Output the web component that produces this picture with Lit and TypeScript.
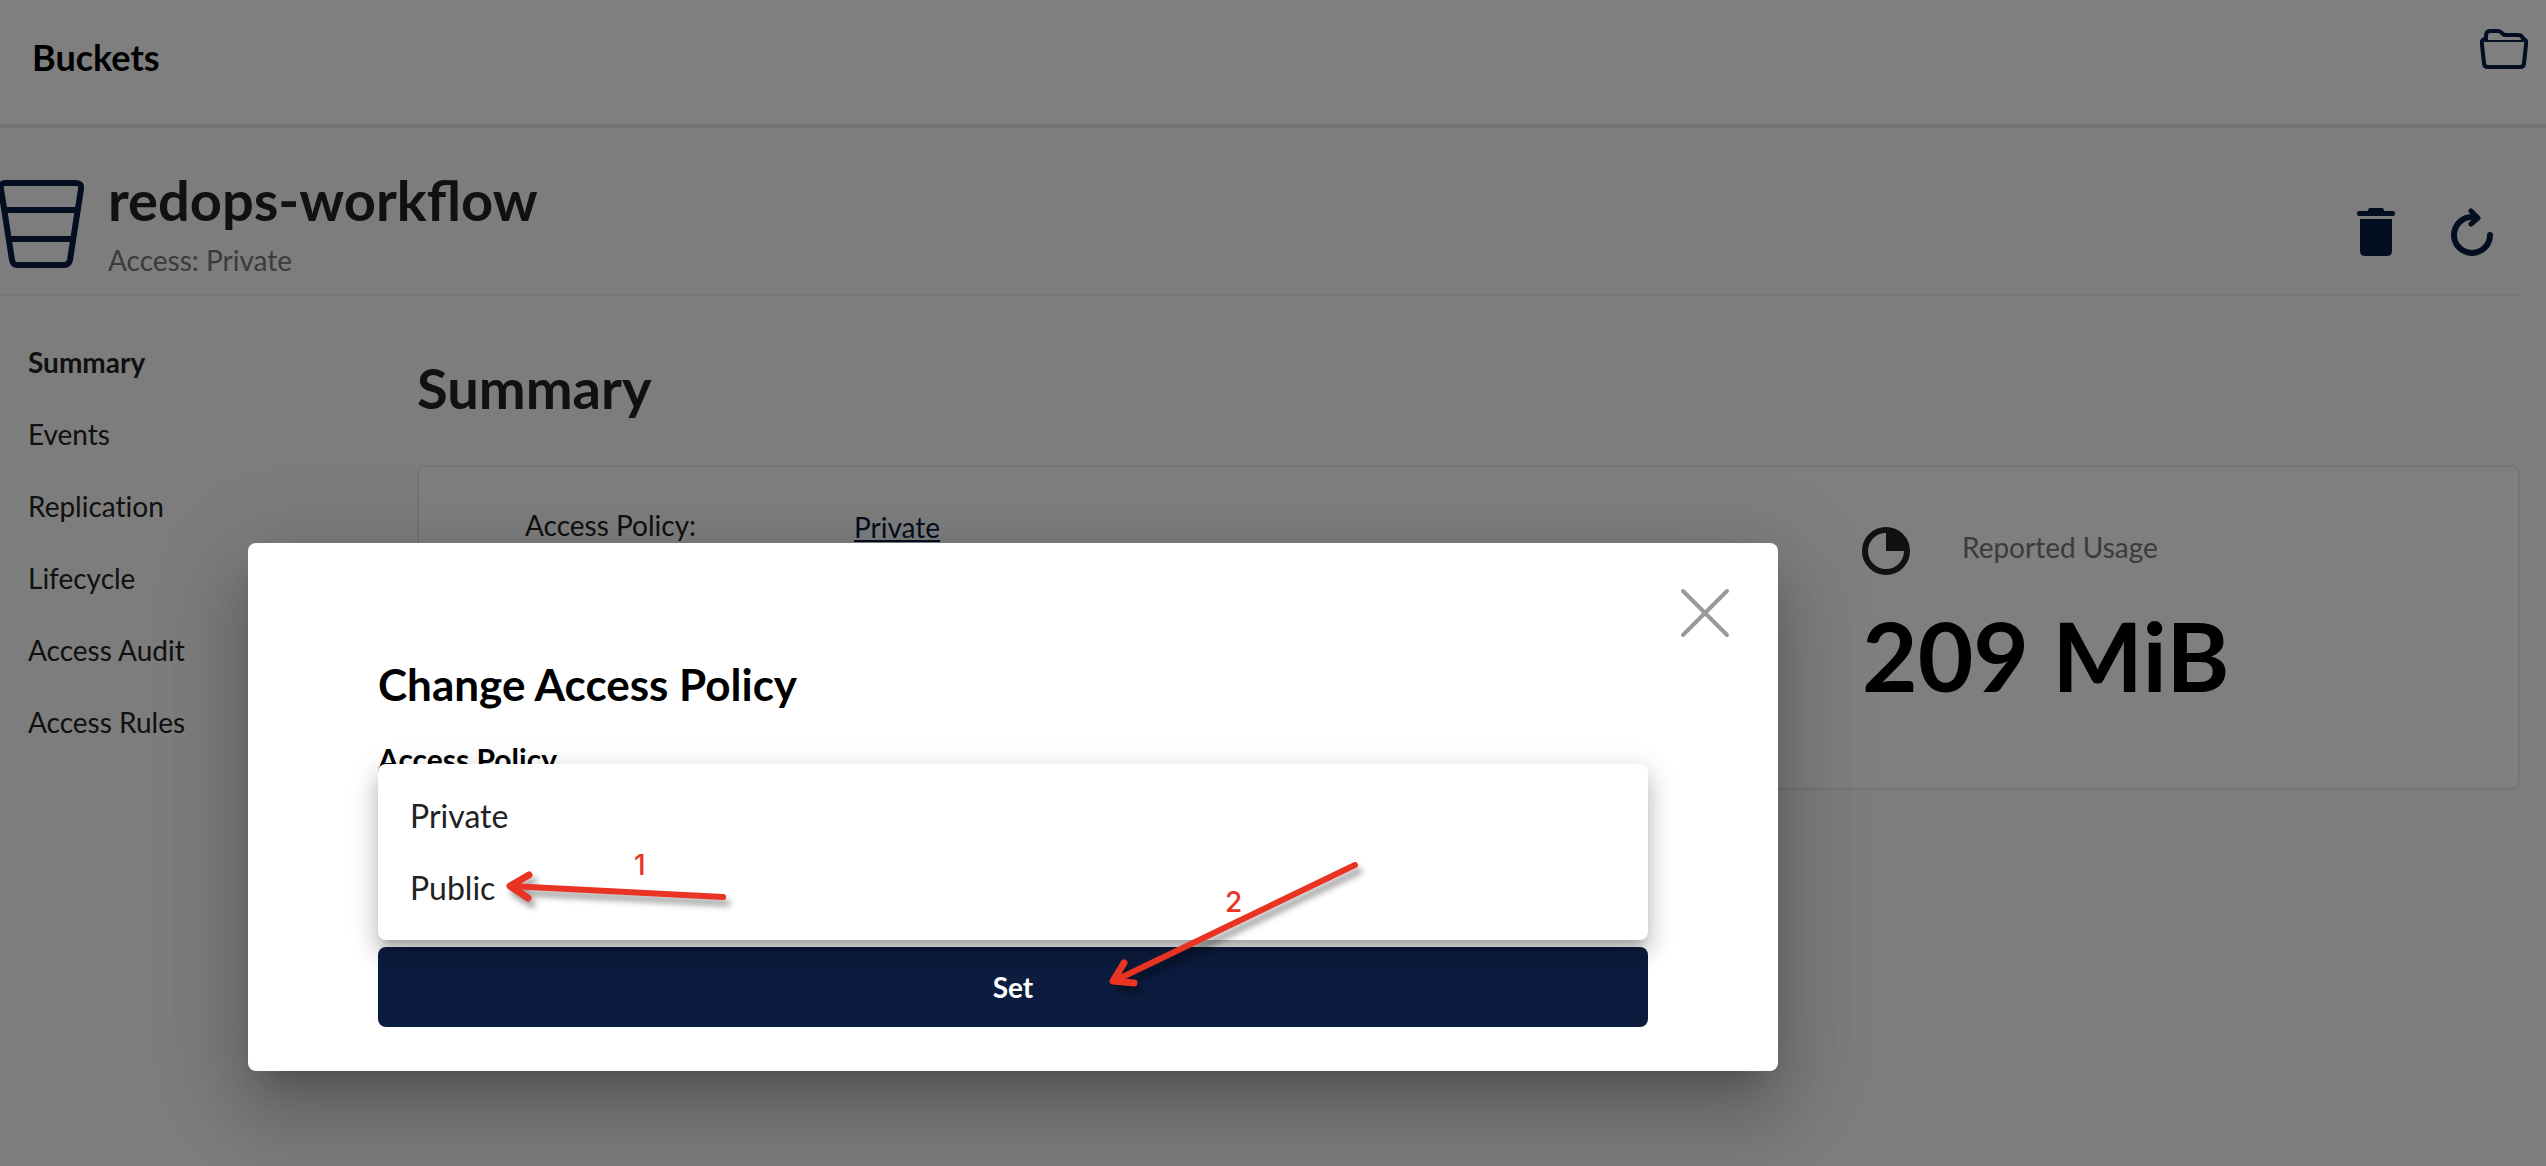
import { LitElement, html, css, svg } from "lit";
import { customElement, state } from "lit/decorators.js";

const NAV = ["Summary", "Events", "Replication", "Lifecycle", "Access Audit", "Access Rules"];
const POLICIES = ["Private", "Public"];

const bucketIcon = html`<svg class="bucket" viewBox="0 0 84 88" aria-hidden="true">
  <g fill="none" stroke="currentColor" stroke-width="6" stroke-linejoin="round">
    <path d="M5 3H76Q82 3 81 9L70 80Q69 85 64 85H17Q13 85 12 80L1 9Q0 3 5 3Z" />
    <path d="M4 30H78M9 59H73" />
  </g>
</svg>`;

const folderIcon = html`<svg class="folder" viewBox="0 0 48 40" aria-hidden="true">
  <g fill="none" stroke="currentColor" stroke-linejoin="round">
    <path stroke-width="4" d="M6 11V7Q6 2 10 2H18Q20 2 22 4Q23 6 26 6H38Q43 6 43 11" />
    <path stroke-width="2" d="M5 12H43" />
    <path stroke-width="4" d="M5 10Q1 11 2 16L4 34Q4 38 8 38H40Q44 38 44 34L46 16Q47 11 43 10" />
  </g>
</svg>`;

const trashIcon = html`<svg class="trash" viewBox="0 0 38 48" aria-hidden="true">
  <path fill="currentColor" d="M13 0H25Q27 0 27 3H36Q38 3 38 5V6Q38 8 36 8H2Q0 8 0 6V5Q0 3 2 3H11Q11 0 13 0ZM3 11H35V43Q35 48 30 48H8Q3 48 3 43Z" />
</svg>`;

const refreshIcon = html`<svg class="refresh" viewBox="0 0 42 48" aria-hidden="true">
  <g fill="none" stroke="currentColor" stroke-linecap="round" stroke-linejoin="round">
    <path stroke-width="6" d="M39 27A18 18 0 1 1 21 9H25" />
    <path stroke-width="5" d="M20 3L27 10L20 16" />
  </g>
</svg>`;

const usageIcon = html`<svg class="usage" viewBox="0 0 48 48" aria-hidden="true">
  <circle cx="24" cy="24" r="21" fill="none" stroke="currentColor" stroke-width="6" />
  <path fill="currentColor" d="M24 2A22 22 0 0 1 46 24H24Z" />
</svg>`;

const closeIcon = html`<svg class="cross" viewBox="0 0 50 50" aria-hidden="true">
  <path fill="none" stroke="currentColor" stroke-width="4" stroke-linecap="round" d="M3 3L47 47M47 3L3 47" />
</svg>`;

@customElement("app-root")
export class AppRoot extends LitElement {
  @state() private policy = "Private";

  static styles = css`
    :host {
      display: block;
      position: relative;
      min-height: 100vh;
      overflow: hidden;
      background: #fbfafa;
      color: #222;
      font: 28px/36px Lato, "Liberation Sans", sans-serif;
    }
    * {
      box-sizing: border-box;
    }
    h1, h2, h3, p, ul, dl, dd {
      margin: 0;
      padding: 0;
    }
    ul {
      list-style: none;
    }
    button {
      border: 0;
      padding: 0;
      background: none;
      color: inherit;
      font: inherit;
      cursor: pointer;
    }
    svg {
      display: block;
    }
    .topbar {
      display: flex;
      align-items: flex-start;
      justify-content: space-between;
      height: 128px;
      padding: 29px 18px 0 32px;
      background: #fff;
      border-bottom: 4px solid #e5e5e5;
    }
    .topbar h1 {
      padding-top: 6px;
      color: #000;
      font-size: 36px;
      line-height: 44px;
    }
    .navy {
      color: #081c42;
    }
    .folder {
      width: 48px;
      height: 40px;
    }
    .content {
      padding-right: 26px;
    }
    .bucket-head {
      display: flex;
      align-items: center;
      height: 168px;
      padding-right: 27px;
      border-bottom: 2px solid #eaeaea;
    }
    .bucket {
      width: 84px;
      height: 88px;
      margin: 26px 24px 0 0;
    }
    .bucket-name {
      flex: 1;
      padding-top: 26px;
    }
    .bucket-name h2 {
      font-size: 56px;
      line-height: 72px;
    }
    .bucket-name p {
      color: #777;
      line-height: 48px;
    }
    .actions {
      display: flex;
      gap: 56px;
      padding-top: 42px;
    }
    .trash {
      width: 38px;
      height: 48px;
    }
    .refresh {
      width: 42px;
      height: 48px;
    }
    .body {
      display: grid;
      grid-template-columns: 417px 1fr;
    }
    .nav {
      padding: 30px 0 0 28px;
      font-variant-ligatures: none;
    }
    .nav a {
      display: block;
      color: inherit;
      line-height: 72px;
      text-decoration: none;
    }
    .nav .current {
      font-weight: 700;
    }
    .panel h2 {
      padding-top: 58px;
      font-size: 56px;
      line-height: 68px;
    }
    .card {
      display: grid;
      grid-template-columns: 1443px 1fr;
      height: 325px;
      margin-top: 43px;
      background: #fff;
      border: 2px solid #eaeaea;
      border-radius: 8px;
    }
    .facts {
      display: flex;
      padding: 40px 0 0 106px;
    }
    .facts dt {
      width: 329px;
    }
    .facts a {
      color: #081c42;
      text-decoration: underline;
      line-height: 40px;
    }
    .usage-head {
      display: flex;
      gap: 52px;
      padding-top: 60px;
    }
    .usage {
      width: 48px;
      height: 48px;
    }
    .usage-head p {
      padding-top: 2px;
      color: #777;
    }
    .total {
      padding-top: 22px;
      color: #000;
      font-size: 96px;
      font-weight: 700;
      line-height: 116px;
    }
    .backdrop {
      position: absolute;
      inset: 0;
      padding: 543px 768px 0 248px;
      background: rgba(0, 0, 0, 0.5);
    }
    .dialog {
      position: relative;
      padding: 45px 130px 44px;
      background: #fff;
      border-radius: 8px;
      color: #000;
      box-shadow: 0 22px 30px -14px rgba(0, 0, 0, 0.2), 0 48px 76px 6px rgba(0, 0, 0, 0.14),
        0 18px 92px 16px rgba(0, 0, 0, 0.12);
    }
    .close {
      display: block;
      margin: 0 -82px 0 auto;
      color: #999;
    }
    .cross {
      width: 50px;
      height: 50px;
    }
    .dialog h3 {
      padding-top: 18px;
      font-size: 44px;
      line-height: 56px;
    }
    .label {
      display: block;
      padding-top: 29px;
      font-size: 30px;
      font-weight: 700;
      line-height: 36px;
    }
    .field {
      height: 235px;
    }
    .menu {
      position: absolute;
      top: 221px;
      left: 130px;
      right: 130px;
      padding: 16px 0;
      background: #fff;
      border-radius: 8px;
      box-shadow: 0 10px 10px -6px rgba(0, 0, 0, 0.2), 0 16px 20px 2px rgba(0, 0, 0, 0.14),
        0 6px 28px 4px rgba(0, 0, 0, 0.12);
    }
    .menu button {
      display: block;
      width: 100%;
      padding: 0 32px;
      color: #222;
      font-size: 32px;
      line-height: 72px;
      text-align: left;
    }
    .set {
      display: block;
      width: 100%;
      height: 80px;
      background: #0c1c3e;
      border-radius: 8px;
      color: #fff;
      font-weight: 700;
    }
    .marks {
      position: absolute;
      top: 0;
      left: 0;
      width: 1530px;
      height: 528px;
      pointer-events: none;
    }
    .marks text {
      fill: #e93323;
      font: 500 28px Inter, sans-serif;
    }
    .arrows {
      filter: drop-shadow(4px 6px 3px rgba(0, 0, 0, 0.4));
    }
  `;

  render() {
    return html`
      <header class="topbar">
        <h1>Buckets</h1>
        <button class="navy" aria-label="Object browser">${folderIcon}</button>
      </header>
      <main class="content">
        <section class="bucket-head">
          <span class="navy">${bucketIcon}</span>
          <div class="bucket-name">
            <h2>redops-workflow</h2>
            <p>Access: Private</p>
          </div>
          <div class="actions navy">
            <button aria-label="Delete bucket">${trashIcon}</button>
            <button aria-label="Refresh">${refreshIcon}</button>
          </div>
        </section>
        <div class="body">
          <nav class="nav">
            ${NAV.map((n, i) => html`<a href="#" class=${i === 0 ? "current" : ""}>${n}</a>`)}
          </nav>
          <section class="panel">
            <h2>Summary</h2>
            <div class="card">
              <dl class="facts">
                <dt>Access Policy:</dt>
                <dd><a href="#">Private</a></dd>
              </dl>
              <div>
                <div class="usage-head">${usageIcon}<p>Reported Usage</p></div>
                <p class="total">209 MiB</p>
              </div>
            </div>
          </section>
        </div>
      </main>
      <div class="backdrop">
        <div class="dialog" role="dialog" aria-modal="true" aria-labelledby="title">
          <button class="close" aria-label="Close">${closeIcon}</button>
          <h3 id="title">Change Access Policy</h3>
          <div class="field">
            <span class="label" id="policy-label">Access Policy</span>
            <ul class="menu" role="listbox" aria-labelledby="policy-label">
              ${POLICIES.map(
                (p) => html`<li role="presentation">
                  <button role="option" aria-selected=${p === this.policy} @click=${() => (this.policy = p)}>${p}</button>
                </li>`
              )}
            </ul>
          </div>
          <button class="set">Set</button>
          <svg class="marks" viewBox="0 0 1530 528">
            ${svg`<g class="arrows" fill="none" stroke="#e93323" stroke-width="6" stroke-linecap="round" stroke-linejoin="round">
              <path d="M475 354L262 343" />
              <path stroke-width="7" d="M281 332L262 343L280 355" />
              <path d="M1107 322L866 438" />
              <path stroke-width="7" d="M876 420L865 438L886 440" />
            </g>
            <text x="386" y="332">1</text>
            <text x="977" y="369">2</text>`}
          </svg>
        </div>
      </div>
    `;
  }
}
